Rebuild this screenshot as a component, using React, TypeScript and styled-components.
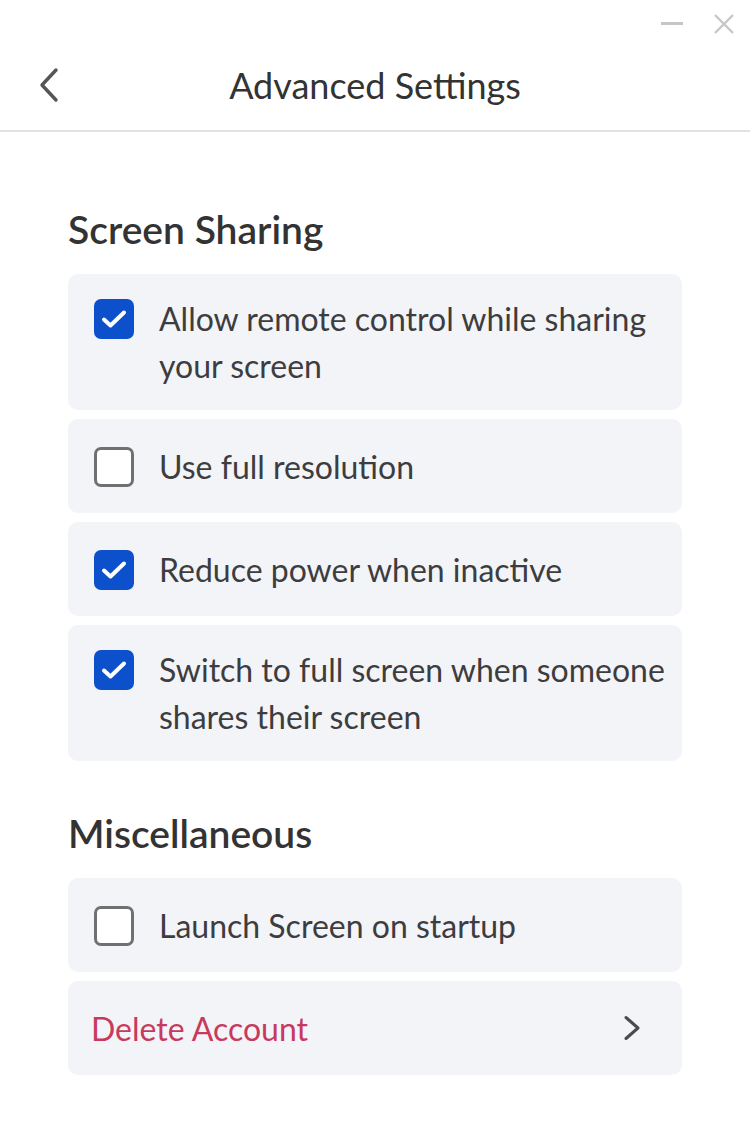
import React, { useState } from 'react';
import styled, { createGlobalStyle } from 'styled-components';

const GlobalStyle = createGlobalStyle`
  html, body {
    margin: 0;
    padding: 0;
    background: #ffffff;
  }
  body {
    font-family: Lato, "Noto Sans", "Liberation Sans", sans-serif;
    color: #3a3a3a;
    -webkit-font-smoothing: antialiased;
  }
  * {
    box-sizing: border-box;
  }
`;

const Window = styled.div`
  width: 750px;
  min-height: 1136px;
  background: #ffffff;
  display: flex;
  flex-direction: column;
`;

const TitleBar = styled.div`
  height: 44px;
  padding: 4px 14px 0 0;
  display: flex;
  justify-content: flex-end;
  align-items: center;
  gap: 28px;
`;

const WinButton = styled.button`
  width: 24px;
  height: 24px;
  padding: 0;
  border: none;
  background: none;
  display: flex;
  align-items: center;
  justify-content: center;
  cursor: pointer;
`;

const Header = styled.header`
  height: 88px;
  display: grid;
  grid-template-columns: 1fr auto 1fr;
  align-items: center;
  border-bottom: 2px solid #e2e2e4;
`;

const BackButton = styled.button`
  justify-self: start;
  margin: 0 0 4px 34px;
  width: 30px;
  height: 40px;
  padding: 0;
  border: none;
  background: none;
  display: flex;
  align-items: center;
  justify-content: center;
  cursor: pointer;
`;

const Title = styled.h1`
  margin: 0 0 5px;
  font-size: 36px;
  line-height: 44px;
  font-weight: 400;
  color: #333333;
`;

const Content = styled.main`
  padding: 77px 68px 40px;
  display: flex;
  flex-direction: column;
`;

const SectionTitle = styled.h2<{ $first?: boolean }>`
  margin: ${p => (p.$first ? '0' : '52px')} 0 25px;
  font-size: 39px;
  line-height: 40px;
  font-weight: 600;
  color: #333333;
`;

const List = styled.div`
  display: flex;
  flex-direction: column;
  gap: 9px;
`;

const Card = styled.div`
  min-height: 94px;
  background: #f3f4f8;
  border-radius: 10px;
  display: flex;
  align-items: center;
  padding: 0 16px 0 26px;
  cursor: pointer;
`;

const Row = styled.label`
  display: flex;
  align-items: flex-start;
  gap: 25px;
  padding: 21px 0;
  width: 100%;
  cursor: pointer;
`;

const Box = styled.span<{ $checked: boolean }>`
  flex: 0 0 40px;
  width: 40px;
  height: 40px;
  margin-top: 4px;
  border-radius: 7px;
  background: ${p => (p.$checked ? '#0c50cc' : '#ffffff')};
  border: ${p => (p.$checked ? 'none' : '3px solid #707072')};
  display: flex;
  align-items: center;
  justify-content: center;
`;

const Label = styled.span`
  font-size: 32px;
  line-height: 47px;
  color: #3d3d3f;
`;

const LinkRow = styled.div`
  width: 100%;
  display: flex;
  align-items: center;
  justify-content: space-between;
  padding-right: 22px;
  margin-left: -3px;
`;

const DangerText = styled.span`
  font-size: 32px;
  line-height: 47px;
  color: #c83a5d;
`;

const Check = () => (
  <svg width="26" height="20" viewBox="0 0 26 20" fill="none">
    <path d="M3 10.5 L9.5 16.5 L23 3.5" stroke="#fff" strokeWidth="4" strokeLinecap="round" strokeLinejoin="round" />
  </svg>
);

type Option = { id: string; text: string; checked: boolean };

function CheckCard({ option, onToggle }: { option: Option; onToggle: () => void }) {
  return (
    <Card onClick={onToggle}>
      <Row>
        <Box $checked={option.checked}>{option.checked && <Check />}</Box>
        <Label>{option.text}</Label>
      </Row>
    </Card>
  );
}

export default function App() {
  const [sharing, setSharing] = useState<Option[]>([
    { id: 'remote', text: 'Allow remote control while sharing your screen', checked: true },
    { id: 'fullres', text: 'Use full resolution', checked: false },
    { id: 'power', text: 'Reduce power when inactive', checked: true },
    { id: 'fullscreen', text: 'Switch to full screen when someone shares their screen', checked: true },
  ]);
  const [launch, setLaunch] = useState(false);

  const toggle = (id: string) =>
    setSharing(list => list.map(o => (o.id === id ? { ...o, checked: !o.checked } : o)));

  return (
    <>
      <GlobalStyle />
      <Window>
        <TitleBar>
          <WinButton aria-label="Minimize">
            <svg width="22" height="4" viewBox="0 0 22 4">
              <rect x="0" y="0" width="22" height="3" fill="#c6c6c8" />
            </svg>
          </WinButton>
          <WinButton aria-label="Close">
            <svg width="22" height="22" viewBox="0 0 22 22">
              <path d="M2 2 L20 20 M20 2 L2 20" stroke="#c6c6c8" strokeWidth="2.4" />
            </svg>
          </WinButton>
        </TitleBar>
        <Header>
          <BackButton aria-label="Back">
            <svg width="22" height="36" viewBox="0 0 22 36" fill="none">
              <path d="M18 3 L4 18 L18 33" stroke="#555557" strokeWidth="3.4" strokeLinecap="round" strokeLinejoin="round" />
            </svg>
          </BackButton>
          <Title>Advanced Settings</Title>
          <span />
        </Header>
        <Content>
          <SectionTitle $first>Screen Sharing</SectionTitle>
          <List>
            {sharing.map(o => (
              <CheckCard key={o.id} option={o} onToggle={() => toggle(o.id)} />
            ))}
          </List>
          <SectionTitle>Miscellaneous</SectionTitle>
          <List>
            <CheckCard
              option={{ id: 'launch', text: 'Launch Screen on startup', checked: launch }}
              onToggle={() => setLaunch(v => !v)}
            />
            <Card>
              <LinkRow>
                <DangerText>Delete Account</DangerText>
                <svg width="18" height="26" viewBox="0 0 18 26" fill="none">
                  <path d="M3 2.5 L15 13 L3 23.5" stroke="#4a4a4c" strokeWidth="3" strokeLinecap="round" strokeLinejoin="round" />
                </svg>
              </LinkRow>
            </Card>
          </List>
        </Content>
      </Window>
    </>
  );
}
